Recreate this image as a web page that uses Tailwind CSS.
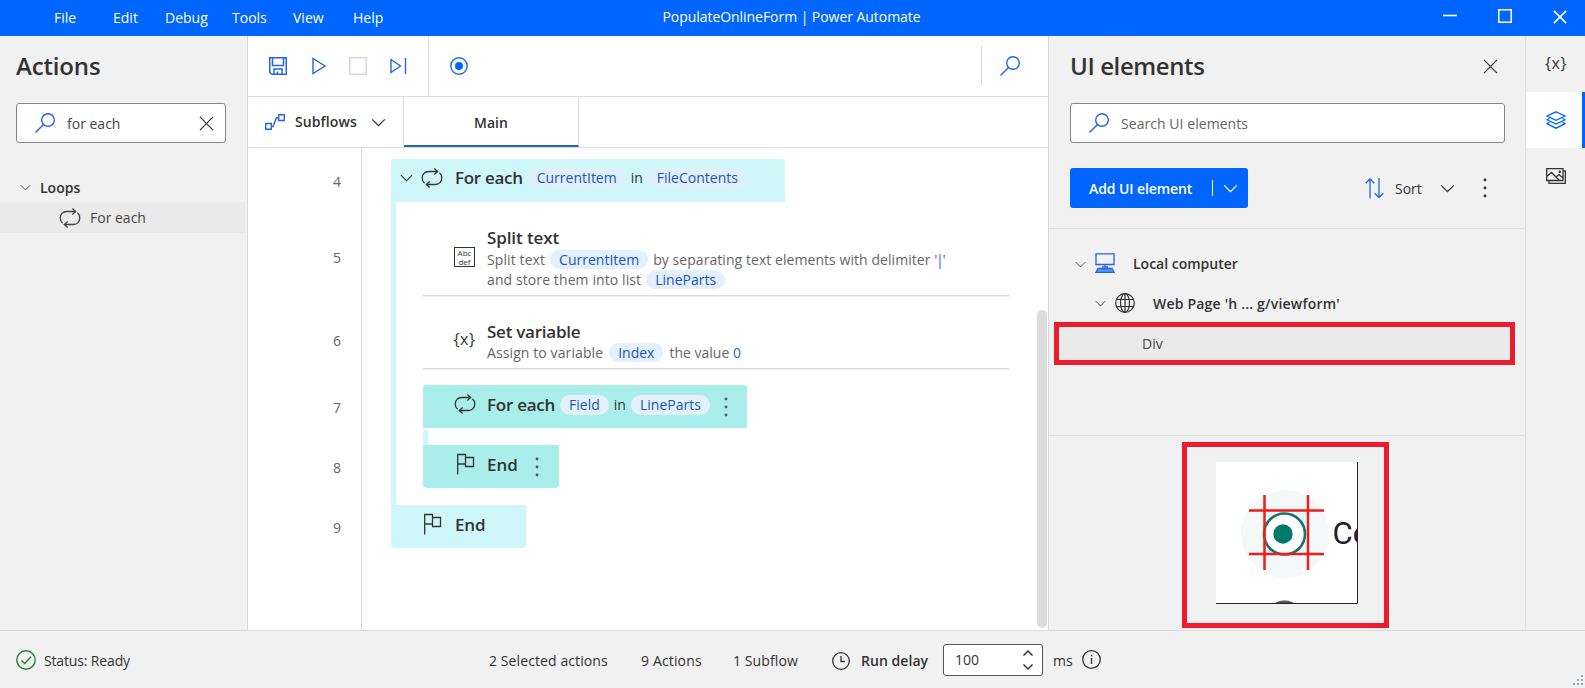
<!DOCTYPE html>
<html lang="en">
<head>
    <meta charset="UTF-8">
    <meta name="viewport" content="width=device-width, initial-scale=1.0">
    <title>PopulateOnlineForm | Power Automate</title>
    <script src="https://cdn.jsdelivr.net/npm/@tailwindcss/browser@4"></script>
</head>
<body class="bg-[#f1f1f1]">

    <!-- shared icons -->
    <svg class="hidden">
        <symbol id="i-search" viewBox="0 0 20 20" fill="none" stroke="currentColor" stroke-width="1.4">
            <circle cx="13" cy="7" r="6.3"/><path d="M8.5 11.5L.5 19.5"/>
        </symbol>
        <symbol id="i-loop" viewBox="0 0 22 20" fill="none" stroke="currentColor" stroke-width="1.3">
            <path d="M3.6 15.2C2 14 1.2 12.2 1.2 10C1.2 6.3 3.8 3.5 7.5 3.5H16.5M13.3 .6L16.7 3.5L13.3 6.5M18.4 4.8C20 6 20.8 7.8 20.8 10C20.8 13.7 18.2 16.5 14.5 16.5H5.5M8.7 13.5L5.3 16.5L8.7 19.4"/>
        </symbol>
        <symbol id="i-chev" viewBox="0 0 16 10" fill="none" stroke="currentColor" stroke-width="1.4">
            <path d="M1 1.5L8 8.5L15 1.5"/>
        </symbol>
        <symbol id="i-close" viewBox="0 0 16 16" fill="none" stroke="currentColor">
            <path d="M1 1L15 15M15 1L1 15"/>
        </symbol>
        <symbol id="i-flag" viewBox="0 0 20 22" fill="none" stroke="currentColor" stroke-width="1.3">
            <path d="M1.7 21.5V1.5H9.5V11H1.7M9.5 4.5H17.5V13.5H9.5V11"/>
        </symbol>
        <symbol id="i-dots" viewBox="0 0 4 20" fill="currentColor">
            <circle cx="2" cy="2" r="1.4"/><circle cx="2" cy="10" r="1.4"/><circle cx="2" cy="18" r="1.4"/>
        </symbol>
    </svg>

    <div class="relative flex h-[688px] w-[1585px] flex-col overflow-hidden bg-[#f1f1f1] font-['Open_Sans',sans-serif] text-[14px] leading-5 text-[#333]">

        <!-- title bar -->
        <header class="relative flex h-9 shrink-0 items-center bg-[#0066ff] pl-[54px] text-white">
            <nav class="flex">
                <span class="w-[59px]">File</span>
                <span class="w-[52px]">Edit</span>
                <span class="w-[67px]">Debug</span>
                <span class="w-[61px]">Tools</span>
                <span class="w-[60px]">View</span>
                <span>Help</span>
            </nav>
            <div class="absolute inset-x-0 top-[7px] pr-[2px] text-center tracking-[-0.05px]"><span>PopulateOnlineForm | Power Automate</span></div>
            <div class="ml-auto flex items-center pr-[18px]">
                <svg class="mr-[41px] mb-[4px] h-[14px] w-[14px]" viewBox="0 0 14 14"><path d="M0 6.5H14" stroke="#fff" stroke-width="1.6"/></svg>
                <svg class="mr-[41px] mb-[5px] h-[14px] w-[14px]" viewBox="0 0 14 14"><rect x=".75" y=".75" width="12.5" height="12.5" fill="none" stroke="#fff" stroke-width="1.5"/></svg>
                <svg class="mb-[3px] h-[14px] w-[14px]" stroke-width="1.8"><use href="#i-close"/></svg>
            </div>
        </header>

        <div class="flex min-h-0 flex-1">

            <!-- actions pane -->
            <aside class="w-[248px] shrink-0 border-r border-[#d8d8d8]">
                <h2 class="pt-[14px] pl-4 text-[24px] leading-8 font-semibold tracking-[-0.15px]"><span>Actions</span></h2>
                <div class="mt-[21px] ml-4 flex h-10 w-[210px] items-center rounded-[3px] border border-[#868686] bg-white pr-[11px] pl-[18px]">
                    <svg class="h-5 w-5 text-[#2266e3]"><use href="#i-search"/></svg>
                    <span class="mt-[2px] ml-[12px] text-[#444]">for each</span>
                    <svg class="ml-auto h-[15px] w-[15px]" stroke-width="1.3"><use href="#i-close"/></svg>
                </div>
                <div class="mt-[32px] mb-[2px] flex h-[25px] items-center pl-5 font-semibold">
                    <svg class="h-[7px] w-[11px] text-[#555]"><use href="#i-chev"/></svg>
                    <span class="ml-[9px]">Loops</span>
                </div>
                <div class="flex h-[31px] w-[245px] items-center bg-[#eaeaea] pl-[59px] text-[#444]">
                    <svg class="h-5 w-[22px]"><use href="#i-loop"/></svg>
                    <span class="ml-[9px]">For each</span>
                </div>
            </aside>

            <!-- designer -->
            <main class="flex w-[801px] shrink-0 flex-col border-r border-[#d8d8d8] bg-white">
                <div class="flex h-[61px] shrink-0 items-stretch border-b border-[#dcdcdc]">
                    <div class="flex w-[181px] items-center border-r border-[#dcdcdc] pl-[21px] text-[#2266e3]">
                        <svg class="h-[18px] w-[18px]" viewBox="0 0 18 18" fill="none" stroke="currentColor" stroke-width="1.5"><path d="M.75 .75H17.25V17.25H3L.75 15.5ZM3.5 .75V8.5H14.5V.75M5 17V12H13V17M8.5 17V14.5"/></svg>
                        <svg class="ml-[25px] h-[18px] w-[14px]" viewBox="0 0 14 18" fill="none" stroke="currentColor" stroke-width="1.4"><path d="M1 1.5V16.5L13 9Z"/></svg>
                        <svg class="ml-[23px] h-[18px] w-[18px] text-[#cdd6ef]" viewBox="0 0 18 18" fill="none" stroke="currentColor" stroke-width="1.4"><rect x=".7" y=".7" width="16.6" height="16.6"/></svg>
                        <svg class="ml-[23px] h-[18px] w-[17px]" viewBox="0 0 17 18" fill="none" stroke="currentColor" stroke-width="1.4"><path d="M1 2.5V15.5L10.5 9ZM15.5 1V17"/></svg>
                    </div>
                    <div class="flex flex-1 items-center pl-[21px]">
                        <svg class="h-[18px] w-[18px]" viewBox="0 0 18 18"><circle cx="9" cy="9" r="8.2" fill="none" stroke="#2266e3" stroke-width="1.4"/><circle cx="9" cy="9" r="4" fill="#0066ff"/></svg>
                        <div class="ml-auto flex h-10 w-[67px] items-center border-l border-[#dcdcdc] pl-[18px]">
                            <svg class="h-5 w-5 text-[#2266e3]"><use href="#i-search"/></svg>
                        </div>
                    </div>
                </div>

                <div class="flex h-[51px] shrink-0 border-b border-[#dcdcdc]">
                    <div class="flex w-[156px] items-center border-r border-[#dcdcdc] pl-[17px] font-semibold">
                        <svg class="h-4 w-5" viewBox="0 0 20 16" fill="none" stroke="#2266e3" stroke-width="1.4"><path d="M.7 9.5H6.3V15.2H.7ZM13.7 .8H19.3V6.5H13.7ZM6.3 12.5H8L11.5 3.7H13.7"/></svg>
                        <span class="ml-[10px] tracking-[0.1px]">Subflows</span>
                        <svg class="mr-[17px] ml-auto h-[9px] w-[15px]"><use href="#i-chev"/></svg>
                    </div>
                    <div class="flex w-[175px] items-center justify-center border-r border-b-2 border-r-[#dcdcdc] border-b-[#2563c0] pt-[3px] font-semibold"><span>Main</span></div>
                </div>

                <div class="relative flex min-h-0 flex-1">
                    <!-- line numbers -->
                    <div class="flex w-[114px] shrink-0 flex-col border-r border-[#dcdcdc] pr-[20px] text-right text-[#666]">
                        <span class="mt-[24px]">4</span>
                        <span class="mt-[56px]">5</span>
                        <span class="mt-[63px]">6</span>
                        <span class="mt-[47px]">7</span>
                        <span class="mt-[40px]">8</span>
                        <span class="mt-[40px]">9</span>
                    </div>

                    <div class="mt-[11px] ml-[29px]">
                        <div class="flex h-[43px] w-[394px] items-center rounded-t-[3px] bg-[#cff6f8] pb-[6px] pl-[9px]">
                            <svg class="h-[8px] w-[13px]"><use href="#i-chev"/></svg>
                            <svg class="ml-[8px] h-5 w-[22px]"><use href="#i-loop"/></svg>
                            <span class="ml-3 text-[17px] font-semibold tracking-[-0.3px]">For each</span>
                            <span class="ml-[5px] rounded-full bg-[#e0f0fb] px-[9px] text-[#1d54c4]">CurrentItem</span>
                            <span class="ml-[5px]">in</span>
                            <span class="ml-[5px] rounded-full bg-[#e0f0fb] px-[9px] text-[#1d54c4]">FileContents</span>
                        </div>

                        <div class="border-l-[5px] border-[#cff6f8] pl-[27px]">
                            <div class="flex h-[94px] w-[586px] items-start border-b border-[#dadada] pt-[24px] pl-[31px] shadow-[0_1px_1px_rgba(0,0,0,0.06)]">
                                <div class="mt-[21px] flex h-5 w-[21px] flex-col items-center border border-[#333] text-[8px] leading-[9px]">
                                    <span>Abc</span>
                                    <span>def</span>
                                </div>
                                <div class="ml-3 text-[#666]">
                                    <div class="text-[17px] leading-6 font-semibold tracking-[-0.1px] text-[#333]"><span>Split text</span></div>
                                    <div class="whitespace-nowrap">
                                        <span class="tracking-[0.1px]">Split text</span><span class="mx-[5px] rounded-full bg-[#e4efff] px-[9px] text-[#1d54c4]">CurrentItem</span><span class="tracking-[0.06px]">by separating text elements with delimiter</span> <span class="tracking-[-1.2px] text-[#2266e3]">'|'</span>
                                    </div>
                                    <div class="whitespace-nowrap">
                                        <span class="tracking-[0.1px]">and store them into list</span><span class="ml-[5px] rounded-full bg-[#e4efff] px-[9px] text-[#1d54c4]">LineParts</span>
                                    </div>
                                </div>
                            </div>

                            <div class="mt-[20px] flex h-[53px] w-[586px] items-start border-b border-[#dadada] pl-[31px] shadow-[0_1px_1px_rgba(0,0,0,0.06)]">
                                <span class="mt-[13px] flex w-[21px] justify-center text-[16px] tracking-[.5px]">{x}</span>
                                <div class="ml-3 pt-[4px] text-[#666]">
                                    <div class="text-[17px] leading-6 font-semibold tracking-[-0.25px] text-[#333]"><span>Set variable</span></div>
                                    <div class="-mt-px whitespace-nowrap">
                                        <span class="tracking-[0.1px]">Assign to variable</span><span class="mx-[6px] rounded-full bg-[#e4efff] px-[9px] text-[#1d54c4]">Index</span><span>the value</span> <span class="text-[#2266e3]">0</span>
                                    </div>
                                </div>
                            </div>

                            <div class="mt-[16px] flex h-[43px] w-[324px] items-center rounded-t-[3px] bg-[#aaeeeb] pb-[4px] pl-[31px]">
                                <svg class="mb-px h-5 w-[22px]"><use href="#i-loop"/></svg>
                                <span class="ml-[11px] text-[17px] font-semibold tracking-[-0.25px]">For each</span>
                                <span class="ml-[5px] rounded-full bg-[#e3f1fc] px-[9px] text-[#1d54c4]">Field</span>
                                <span class="ml-[5px]">in</span>
                                <span class="ml-[5px] rounded-full bg-[#e3f1fc] px-[9px] text-[#1d54c4]">LineParts</span>
                                <svg class="mt-[5px] mr-[19px] ml-auto h-5 w-1 text-[#555]"><use href="#i-dots"/></svg>
                            </div>
                            <div class="mt-[2px] h-[15px] w-[5px] bg-[#cff6f8]"></div>
                            <div class="flex h-[43px] w-[136px] items-center rounded-b-[4px] bg-[#aaeeeb] pb-[5px] pl-[33px]">
                                <svg class="h-[22px] w-5"><use href="#i-flag"/></svg>
                                <span class="mt-px ml-[11px] text-[17px] font-semibold">End</span>
                                <svg class="mt-[6px] mr-[20px] ml-auto h-5 w-1 text-[#555]"><use href="#i-dots"/></svg>
                            </div>
                            <div class="h-[17px]"></div>
                        </div>

                        <div class="flex h-[43px] w-[135px] items-center rounded-b-[4px] bg-[#cff6f8] pb-[5px] pl-8">
                            <svg class="h-[22px] w-5"><use href="#i-flag"/></svg>
                            <span class="mt-px ml-3 text-[17px] font-semibold tracking-[-0.2px]">End</span>
                        </div>
                    </div>

                    <div class="absolute top-[162px] right-px h-[318px] w-[10px] rounded-full bg-[#dcdcdc]"></div>
                </div>
            </main>

            <!-- ui elements pane -->
            <section class="flex w-[477px] shrink-0 flex-col border-r border-[#e2e2e2]">
                <div class="flex h-[193px] shrink-0 flex-col border-b border-[#e0e0e0] pr-[20px] pl-[21px]">
                    <div class="flex items-center pt-[14px]">
                        <h2 class="text-[24px] leading-8 font-semibold tracking-[-0.4px]"><span>UI elements</span></h2>
                        <svg class="mt-px mr-[7px] ml-auto h-[15px] w-[15px]" stroke-width="1.3"><use href="#i-close"/></svg>
                    </div>
                    <div class="mt-[21px] flex h-10 w-[435px] items-center rounded-[3px] border border-[#868686] bg-white pl-[18px]">
                        <svg class="h-5 w-5 text-[#2266e3]"><use href="#i-search"/></svg>
                        <span class="mt-[2px] ml-[12px] tracking-[0.05px] text-[#666]">Search UI elements</span>
                    </div>
                    <div class="mt-[25px] flex items-center">
                        <div class="flex h-10 w-[178px] items-center rounded-[3px] bg-[#0066ff] pr-[10px] pl-[19px] font-semibold text-white">
                            <span class="mt-px tracking-[-0.1px]">Add UI element</span>
                            <div class="ml-auto h-4 w-px bg-white"></div>
                            <svg class="ml-[10px] h-[9px] w-[15px]"><use href="#i-chev"/></svg>
                        </div>
                        <svg class="ml-[117px] h-[21px] w-[19px] text-[#2266e3]" viewBox="0 0 19 21" fill="none" stroke="currentColor" stroke-width="1.3"><path d="M5 20.5V1M.7 5.3L5 1L9.3 5.3M14 0V19.5M9.7 15.2L14 19.5L18.3 15.2"/></svg>
                        <span class="mt-px ml-[11px]">Sort</span>
                        <svg class="ml-auto h-[9px] w-[15px]"><use href="#i-chev"/></svg>
                        <svg class="mr-[18px] ml-[28px] h-5 w-1"><use href="#i-dots"/></svg>
                    </div>
                </div>

                <div class="h-[207px] shrink-0 border-b border-[#e0e0e0] pt-[15px]">
                    <div class="flex h-10 items-center pl-[26px] font-semibold">
                        <svg class="h-[7px] w-[11px] text-[#555]"><use href="#i-chev"/></svg>
                        <svg class="mb-[3px] ml-[9px] h-5 w-5" viewBox="0 0 20 20" fill="none" stroke="#2266e3" stroke-width="1.3"><path d="M1 .8H19V11.5H1ZM10 11.5V14.5M7 14H13"/><path d="M3 15.5H17L19 19.3H1Z" fill="#5b95f5"/></svg>
                        <span class="ml-[18px]">Local computer</span>
                    </div>
                    <div class="flex h-[38px] items-center pt-px pl-[46px] font-semibold">
                        <svg class="h-[7px] w-[11px] text-[#555]"><use href="#i-chev"/></svg>
                        <svg class="mb-px ml-[9px] h-5 w-5" viewBox="0 0 20 20" fill="none" stroke="#333" stroke-width="1.2"><circle cx="10" cy="10" r="9.3"/><ellipse cx="10" cy="10" rx="4.5" ry="9.3"/><path d="M10 .7V19.3M1.7 6.5H18.3M1.7 13.5H18.3"/></svg>
                        <span class="ml-[18px] tracking-[0.2px]">Web Page 'h ... g/viewform'</span>
                    </div>
                    <div class="ml-[5px] flex h-[43px] w-[461px] items-center border-[5px] border-[#ec1c2e] bg-[#eaeaea] pl-[83px] text-[#444]"><span>Div</span></div>
                </div>

                <div class="pt-[6px] pl-[133px]">
                    <div class="h-[186px] w-[207px] border-[5px] border-[#ec1c2e] pt-[15px] pl-[29px]">
                        <svg class="h-[142px] w-[142px]" viewBox="0 0 142 142">
                            <rect width="142" height="142" fill="#fff"/>
                            <circle cx="69" cy="72" r="44" fill="#f5f8f8"/>
                            <circle cx="68.5" cy="72" r="20.5" fill="#fff" stroke="#13766b" stroke-width="2.6"/>
                            <circle cx="67" cy="72" r="9.7" fill="#00796b"/>
                            <path d="M48.5 33V108M92 33V108M33 48.5H108M33 92H108" stroke="#f01c1c" stroke-width="2.5" fill="none"/>
                            <text x="116.5" y="82" font-family="Roboto" font-size="31" fill="#202124">Co</text>
                            <circle cx="68.5" cy="158" r="19.5" fill="#555"/>
                            <path d="M141.5 0V141.5H0" fill="none" stroke="#222" stroke-width="1"/>
                        </svg>
                    </div>
                </div>
            </section>

            <!-- right rail -->
            <div class="flex flex-1 flex-col">
                <div class="flex h-14 items-center pb-[3px] pl-[19px] text-[16px] tracking-[.5px]"><span>{x}</span></div>
                <div class="flex h-14 items-center border-r-[3px] border-[#0066ff] bg-white pl-[20px]">
                    <svg class="h-[18px] w-5" viewBox="0 0 20 18" fill="none" stroke="#0066ff" stroke-width="1.3"><path d="M10 .8L19 5L10 9.3L1 5ZM3.5 7.3L1 8.8L10 13.1L19 8.8L16.5 7.3M3.5 11.2L1 12.7L10 17.2L19 12.7L16.5 11.2"/></svg>
                </div>
                <div class="flex h-14 items-center pl-[20px]">
                    <svg class="h-4 w-5" viewBox="0 0 20 16" fill="none" stroke="#333" stroke-width="1.3"><path d="M.7 .7H17V12.5H.7ZM17 2.8H19.3V15.3H3V12.5M.7 8.5L5.5 4.5L13.5 12.5M10 9L13 6.5L17 10"/><circle cx="13.8" cy="3.8" r=".6"/></svg>
                </div>
            </div>
        </div>

        <!-- status bar -->
        <footer class="flex h-[58px] shrink-0 items-center border-t border-[#dcdcdc] pl-4">
            <svg class="h-5 w-5" viewBox="0 0 20 20" fill="none" stroke="#2c7d38" stroke-width="1.4"><circle cx="10" cy="10" r="9.2"/><path d="M5.5 10.5L8.7 13.5L15 6.8"/></svg>
            <span class="mt-[2px] ml-[8px] w-[445px] tracking-[-0.15px]">Status: Ready</span>
            <span class="mt-[2px] w-[152px] tracking-[0.1px]">2 Selected actions</span>
            <span class="mt-[2px] w-[92px] tracking-[0.15px]">9 Actions</span>
            <span class="mt-[2px] w-[99px] tracking-[0.1px]">1 Subflow</span>
            <svg class="mt-[2px] h-[18px] w-[18px]" viewBox="0 0 18 18" fill="none" stroke="#333" stroke-width="1.3"><circle cx="9" cy="9" r="8.3"/><path d="M9 4V9.5H13"/></svg>
            <span class="mt-[2px] ml-[11px] w-[82px] font-semibold tracking-[0.05px]">Run delay</span>
            <div class="flex h-8 w-[100px] items-center rounded-[3px] border border-[#555] bg-white pr-[8px] pl-[11px]">
                <span>100</span>
                <svg class="ml-auto h-[22px] w-3" viewBox="0 0 12 22" fill="none" stroke="#333" stroke-width="1.5"><path d="M1.5 6.5L6 2L10.5 6.5M1.5 15.5L6 20L10.5 15.5"/></svg>
            </div>
            <span class="mt-[2px] ml-[10px] w-[29px]">ms</span>
            <svg class="h-[19px] w-[19px]" viewBox="0 0 19 19" fill="none" stroke="#333" stroke-width="1.3"><circle cx="9.5" cy="9.5" r="8.8"/><path d="M9.5 8V14M9.5 4.8V6.3"/></svg>
            <svg class="ml-auto h-4 w-4 self-end" viewBox="0 0 16 16" fill="#9aa3b5"><path d="M12 3h2v2h-2zM8 7h2v2H8zM12 7h2v2h-2zM4 11h2v2H4zM8 11h2v2H8zM12 11h2v2h-2z"/></svg>
        </footer>
    </div>
</body>
</html>
